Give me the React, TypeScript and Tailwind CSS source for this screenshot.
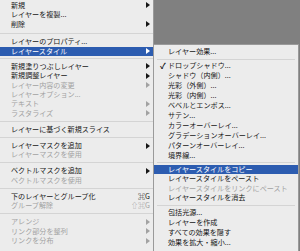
import React from "react";

type Item =
  | { sep: true; h: number }
  | {
      sep?: false;
      label: string;
      h: number;
      disabled?: boolean;
      arrow?: boolean;
      shortcut?: string;
      active?: boolean;
      check?: boolean;
    };

const R = 9.4;
const mainItems: Item[] = [
  { label: "新規", h: R, arrow: true },
  { label: "レイヤーを複製...", h: R },
  { label: "削除", h: R, arrow: true },
  { sep: true, h: 8.2 },
  { label: "レイヤーのプロパティ...", h: R },
  { label: "レイヤースタイル", h: R, arrow: true, active: true },
  { sep: true, h: 5.8 },
  { label: "新規塗りつぶしレイヤー", h: R, arrow: true },
  { label: "新規調整レイヤー", h: R, arrow: true },
  { label: "レイヤー内容の変更", h: R, arrow: true, disabled: true },
  { label: "レイヤーオプション...", h: R, disabled: true },
  { label: "テキスト", h: R, arrow: true, disabled: true },
  { label: "ラスタライズ", h: R, arrow: true, disabled: true },
  { sep: true, h: 6.7 },
  { label: "レイヤーに基づく新規スライス", h: R },
  { sep: true, h: 6.7 },
  { label: "レイヤーマスクを追加", h: R, arrow: true },
  { label: "レイヤーマスクを使用", h: R, disabled: true },
  { sep: true, h: 6.7 },
  { label: "ベクトルマスクを追加", h: R, arrow: true },
  { label: "ベクトルマスクを使用", h: R, disabled: true },
  { sep: true, h: 6.7 },
  { label: "下のレイヤーとグループ化", h: R, shortcut: "⌘G" },
  { label: "グループ解除", h: R, shortcut: "⇧⌘G", disabled: true },
  { sep: true, h: 6.7 },
  { label: "アレンジ", h: R, arrow: true, disabled: true },
  { label: "リンク部分を整列", h: R, arrow: true, disabled: true },
  { label: "リンクを分布", h: R, arrow: true, disabled: true },
];

const subItems: Item[] = [
  { label: "レイヤー効果...", h: 10 },
  { sep: true, h: 4 },
  { label: "ドロップシャドウ...", h: 10, check: true },
  { label: "シャドウ（内側）...", h: 10 },
  { label: "光彩（外側）...", h: 10 },
  { label: "光彩（内側）...", h: 10 },
  { label: "ベベルとエンボス...", h: 10 },
  { label: "サテン...", h: 10 },
  { label: "カラーオーバーレイ...", h: 10 },
  { label: "グラデーションオーバーレイ...", h: 10 },
  { label: "パターンオーバーレイ...", h: 10 },
  { label: "境界線...", h: 10 },
  { sep: true, h: 3.5 },
  { label: "レイヤースタイルをコピー", h: 9.5, active: true },
  { label: "レイヤースタイルをペースト", h: 9.5 },
  { label: "レイヤースタイルをリンクにペースト", h: 9.5, disabled: true },
  { label: "レイヤースタイルを消去", h: 9.5 },
  { sep: true, h: 5.5 },
  { label: "包括光源...", h: 9.8 },
  { label: "レイヤーを作成", h: 9.8 },
  { label: "すべての効果を隠す", h: 9.8 },
  { label: "効果を拡大・縮小...", h: 9.8 },
];

function Arrow({ color }: { color: string }) {
  return (
    <svg width="4" height="6" viewBox="0 0 4 6" className="shrink-0">
      <path d="M0 0 L4 3 L0 6 Z" fill={color} />
    </svg>
  );
}

function Row({ item, sub }: { item: Item; sub?: boolean }) {
  if (item.sep) {
    return (
      <div className="flex flex-col justify-center" style={{ height: item.h }}>
        <div className={`h-px bg-[#d4d4d4] ${sub ? "mx-[3px]" : ""}`} />
      </div>
    );
  }
  const color = item.active
    ? "text-white"
    : item.disabled
    ? "text-[#a2a2a2]"
    : "text-[#161616]";
  const arrowColor = item.active ? "#ffffff" : item.disabled ? "#a2a2a2" : "#161616";
  return (
    <div
      className={`relative flex items-center ${
        sub ? "pl-[14px] pr-[4px]" : "pl-[11px] pr-[3px]"
      } ${item.active ? "bg-[#2c5cb0]" : ""} ${color}`}
      style={{ height: item.h }}
    >
      {item.check && (
        <span className="absolute left-[6px] top-1/2 -translate-y-1/2 text-[8px] font-bold leading-none">
          ✓
        </span>
      )}
      <span className="flex-1 whitespace-nowrap leading-none">{item.label}</span>
      {item.shortcut && (
        <span className="whitespace-nowrap leading-none">{item.shortcut}</span>
      )}
      {item.arrow && <Arrow color={arrowColor} />}
    </div>
  );
}

export default function App() {
  return (
    <div
      className="flex h-[251px] w-[300px] overflow-hidden text-[7.1px] bg-[#808080]"
      style={{ fontFamily: '"Noto Sans CJK JP", "DejaVu Sans", sans-serif' }}
    >
      <div className="flex w-[154px] shrink-0 flex-col border-r border-[#9a9a9a] bg-[#ececec] pt-[0.8px]">
        {mainItems.map((it, i) => (
          <Row key={i} item={it} />
        ))}
      </div>
      <div className="flex w-[146px] flex-col">
        <div className="h-[44px] shrink-0 bg-[#808080]" />
        <div className="flex w-[145px] flex-1 flex-col border-r border-t border-[#9a9a9a] bg-[#ececec] pt-[2px]">
          {subItems.map((it, i) => (
            <Row key={i} item={it} sub />
          ))}
        </div>
      </div>
    </div>
  );
}
